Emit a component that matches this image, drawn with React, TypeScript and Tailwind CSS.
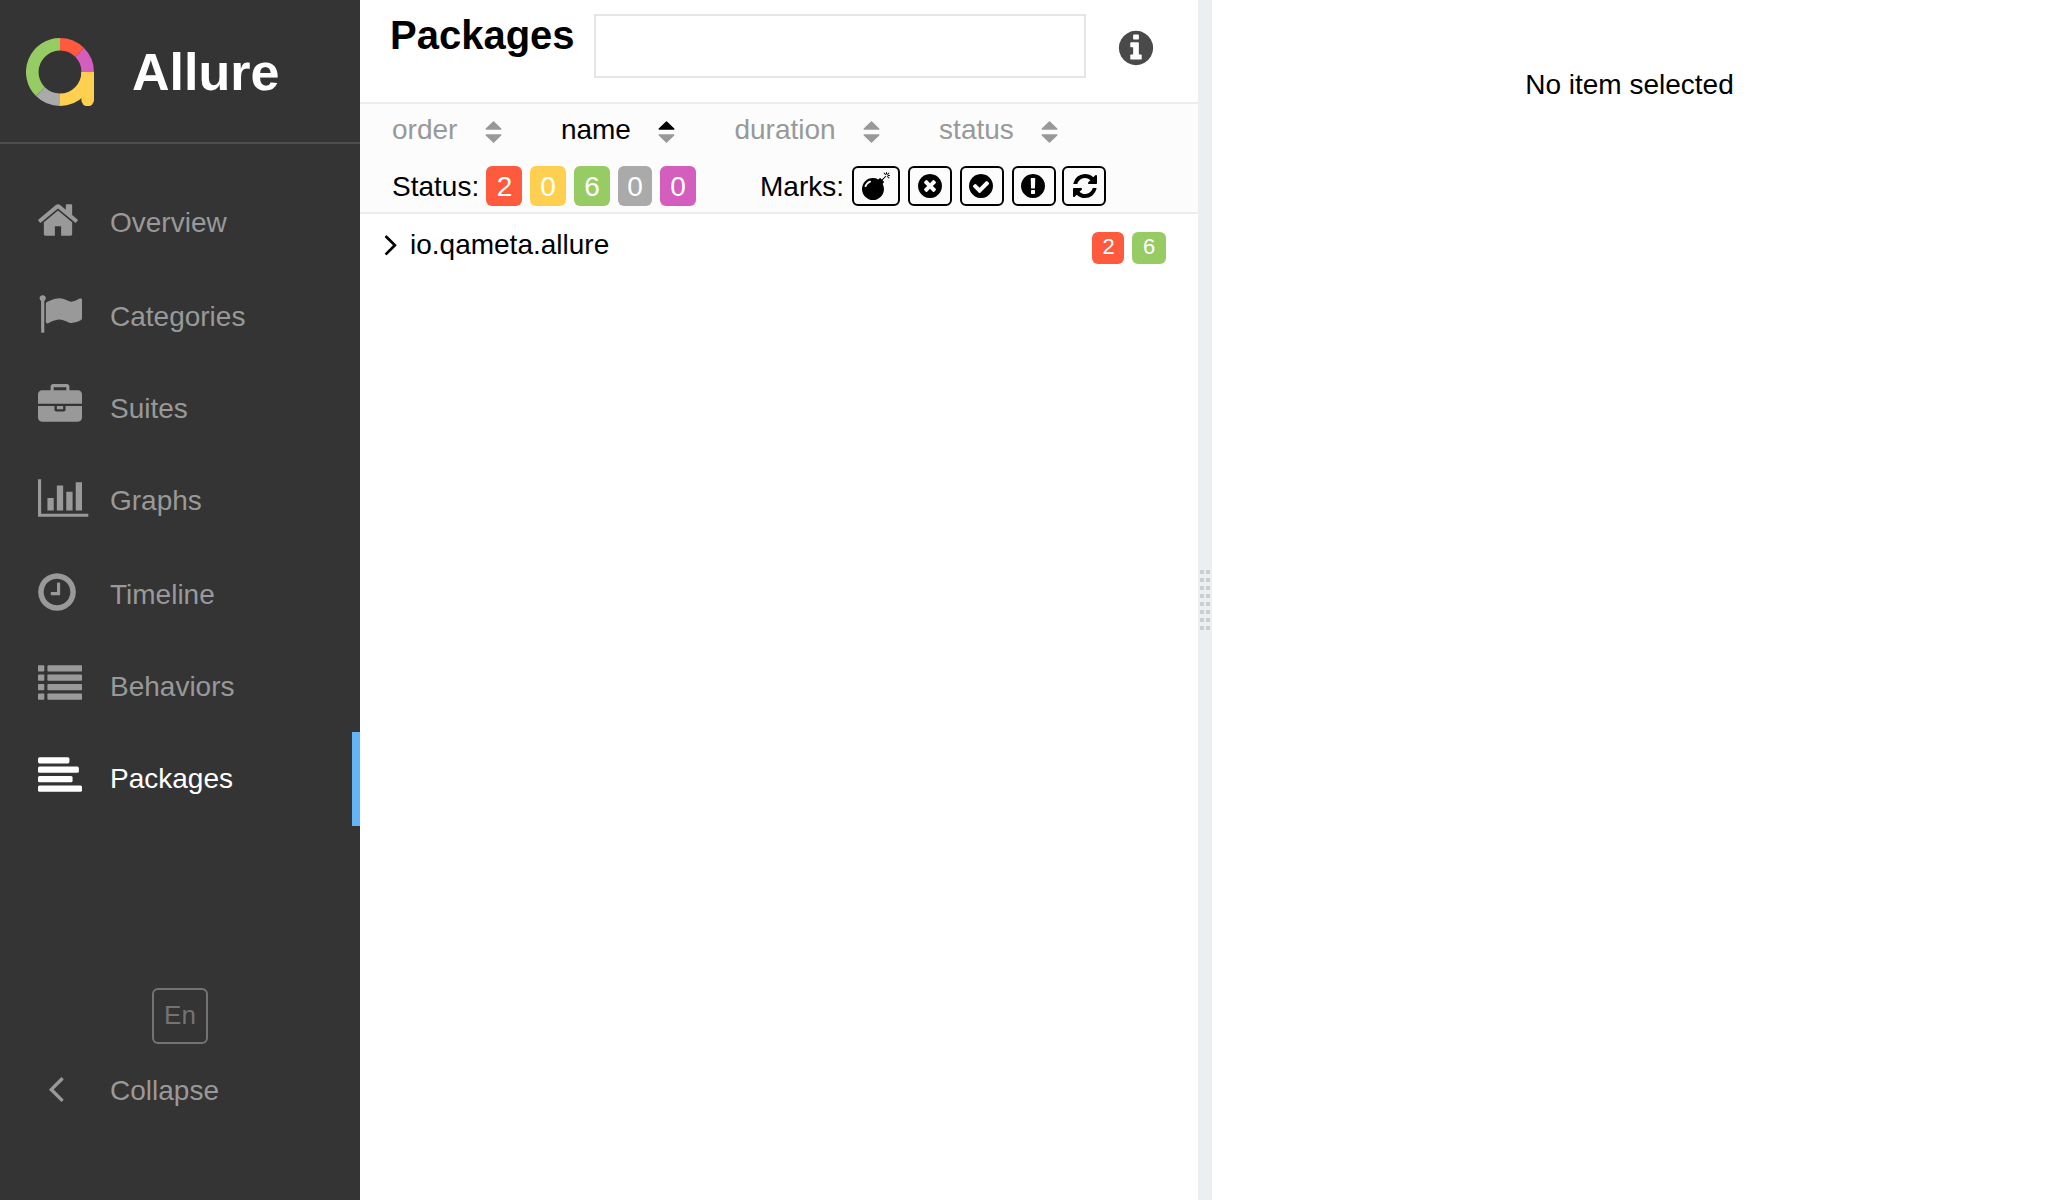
import React from "react";

const DISC =
  "M896 128q209 0 385.5 103t279.5 279.5 103 385.5-103 385.5-279.5 279.5-385.5 103-385.5-103-279.5-279.5-103-385.5 103-385.5 279.5-279.5 385.5-103z";

const PATHS = {
  home: "M1472 992v480q0 26-19 45t-45 19h-384v-384h-256v384h-384q-26 0-45-19t-19-45v-480q0-1 .5-3t.5-3l575-474 575 474q1 2 1 6zm223-69l-62 74q-8 9-21 11h-3q-13 0-21-7l-692-577-692 577q-12 8-24 7-13-2-21-11l-62-74q-8-10-7-23.5t11-21.5l719-599q32-26 76-26t76 26l244 204v-195q0-14 9-23t23-9h192q14 0 23 9t9 23v408l219 182q10 8 11 21.5t-7 23.5z",
  flag: "M320 256q0 72-64 110v1266q0 13-9.5 22.5t-22.5 9.5h-64q-13 0-22.5-9.5t-9.5-22.5v-1266q-64-38-64-110 0-53 37.5-90.5t90.5-37.5 90.5 37.5 37.5 90.5zm1472 64v763q0 25-12.5 38.5t-39.5 27.5q-215 116-369 116-61 0-123.5-22t-108.5-48-115.5-48-142.5-22q-192 0-464 146-17 9-33 9-26 0-45-19t-19-45v-742q0-32 31-55 21-14 79-43 236-120 421-120 107 0 200 29t219 88q38 19 88 19 54 0 117.5-21t110-47 88-47 54.5-21q26 0 45 19t19 45z",
  briefcase:
    "M640 256h512v-128h-512v128zm1152 640v480q0 66-47 113t-113 47h-1472q-66 0-113-47t-47-113v-480h672v160q0 26 19 45t45 19h320q26 0 45-19t19-45v-160h672zm-768 0v128h-256v-128h256zm768-480v384h-1792v-384q0-66 47-113t113-47h352v-160q0-40 28-68t68-28h576q40 0 68 28t28 68v160h352q66 0 113 47t47 113z",
  chart:
    "M640 896v512h-256v-512h256zm384-512v1024h-256v-1024h256zm1024 1152v128h-2048v-1536h128v1408h1920zm-640-896v768h-256v-768h256zm384-384v1152h-256v-1152h256z",
  clock:
    "M1024 544v448q0 14-9 23t-23 9h-320q-14 0-23-9t-9-23v-64q0-14 9-23t23-9h224v-352q0-14 9-23t23-9h64q14 0 23 9t9 23zm416 352q0-148-73-273t-198-198-273-73-273 73-198 198-73 273 73 273 198 198 273 73 273-73 198-198 73-273zm224 0q0 209-103 385.5t-279.5 279.5-385.5 103-385.5-103-279.5-279.5-103-385.5 103-385.5 279.5-279.5 385.5-103 385.5 103 279.5 279.5 103 385.5z",
  left: "M1203 544q0 13-10 23l-393 393 393 393q10 10 10 23t-10 23l-50 50q-10 10-23 10t-23-10l-466-466q-10-10-10-23t10-23l466-466q10-10 23-10t23 10l50 50q10 10 10 23z",
  right:
    "M1171 960q0 13-10 23l-466 466q-10 10-23 10t-23-10l-50-50q-10-10-10-23t10-23l393-393-393-393q-10-10-10-23t10-23l50-50q10-10 23-10t23 10l466 466q10 10 10 23z",
  info:
    DISC +
    "M1152 1376v-160q0-14-9-23t-23-9h-96v-512q0-14-9-23t-23-9h-320q-14 0-23 9t-9 23v160q0 14 9 23t23 9h96v320h-96q-14 0-23 9t-9 23v160q0 14 9 23t23 9h448q14 0 23-9t9-23zm-128-896v-160q0-14-9-23t-23-9h-192q-14 0-23 9t-9 23v160q0 14 9 23t23 9h192q14 0 23-9t9-23z",
  times:
    DISC +
    "M1277 1122q0-26-19-45l-181-181 181-181q19-19 19-45 0-27-19-46l-90-90q-19-19-46-19-26 0-45 19l-181 181-181-181q-19-19-45-19-27 0-46 19l-90 90q-19 19-19 46 0 26 19 45l181 181-181 181q-19 19-19 45 0 27 19 46l90 90q19 19 46 19 26 0 45-19l181-181 181 181q19 19 45 19 27 0 46-19l90-90q19-19 19-46z",
  check:
    DISC +
    "M1412 734q0-28-18-46l-91-90q-19-19-45-19t-45 19l-408 407-226-226q-19-19-45-19t-45 19l-91 90q-18 18-18 46 0 27 18 45l362 362q19 19 45 19 27 0 46-19l543-543q18-18 18-45z",
  exclamation:
    DISC +
    "M1024 1375v-190q0-14-9-23.5t-22-9.5h-192q-13 0-23 10t-10 23v190q0 13 10 23t23 10h192q13 0 22-9.5t9-23.5zm-2-344l18-621q0-12-10-18-10-8-24-8h-220q-14 0-24 8-10 6-10 18l17 621q0 10 10 17.5t24 7.5h185q14 0 23.5-7.5t10.5-17.5z",
  refresh:
    "M1639 1056q0 5-1 7-64 268-268 434.5t-478 166.5q-146 0-282.5-55t-243.5-157l-129 129q-19 19-45 19t-45-19-19-45v-448q0-26 19-45t45-19h448q26 0 45 19t19 45-19 45l-137 137q71 66 161 102t187 36q134 0 250-65t186-179q11-17 53-117 8-23 30-23h192q13 0 22.5 9.5t9.5 22.5zm25-800v448q0 26-19 45t-45 19h-448q-26 0-45-19t-19-45 19-45l138-138q-148-137-349-137-134 0-250 65t-186 179q-11 17-53 117-8 23-30 23h-199q-13 0-22.5-9.5t-9.5-22.5v-7q65-268 270-434.5t480-166.5q146 0 284 55.5t245 156.5l130-129q19-19 45-19t45 19 19 45z",
  bomb: "M571 589q-10-25-34-35t-49 0q-108 44-191 127t-127 191q-10 25 0 49t35 34q13 5 24 5 42 0 60-40 34-84 98.5-148.5t148.5-98.5q25-11 35-35t0-49zm942-356l46 46-244 243 68 68q19 19 19 45.5t-19 45.5l-64 64q89 161 89 343 0 143-55.5 273.5t-150 225-225 150-273.5 55.5-273.5-55.5-225-150-150-225-55.5-273.5 55.5-273.5 150-225 225-150 273.5-55.5q182 0 343 89l64-64q19-19 45.5-19t45.5 19l68 68zm8-56q-10 10-22 10-13 0-23-10l-91-90q-9-10-9-23t9-23q10-9 23-9t23 9l90 91q10 9 10 22.5t-10 22.5zm230 230q-11 9-23 9t-23-9l-90-91q-10-9-10-22.5t10-22.5q9-10 22.5-10t22.5 10l91 90q9 10 9 23t-9 23zm41-183q0 14-9 23t-23 9h-96q-14 0-23-9t-9-23 9-23 23-9h96q14 0 23 9t9 23zm-192-192v96q0 14-9 23t-23 9-23-9-9-23v-96q0-14 9-23t23-9 23 9 9 23zm151 55l-91 90q-10 10-22 10-13 0-23-10-10-9-10-22.5t10-22.5l90-91q10-9 23-9t23 9q9 10 9 23t-9 23z",
};

type Glyph = keyof typeof PATHS;

function Icon({ name, className }: { name: Glyph; className: string }) {
  return (
    <svg viewBox={name === "chart" ? "0 0 2048 1792" : "0 0 1792 1792"} fill="currentColor" fillRule="evenodd" className={`shrink-0 overflow-visible ${className}`}>
      <path d={PATHS[name]} />
    </svg>
  );
}

function ListIcon() {
  return (
    <svg viewBox="0 0 1792 1792" fill="currentColor" className="size-11">
      {[128, 512, 896, 1280].map((y) => (
        <g key={y}>
          <rect x="0" y={y} width="256" height="256" rx="32" />
          <rect x="384" y={y} width="1408" height="256" rx="32" />
        </g>
      ))}
    </svg>
  );
}

function AlignIcon() {
  return (
    <svg viewBox="0 0 1792 1792" fill="currentColor" className="size-11">
      <rect x="0" y="128" width="1280" height="256" rx="64" />
      <rect x="0" y="512" width="1664" height="256" rx="64" />
      <rect x="0" y="896" width="1408" height="256" rx="64" />
      <rect x="0" y="1280" width="1792" height="256" rx="64" />
    </svg>
  );
}

function Logo() {
  return (
    <svg viewBox="0 0 68 68" className="size-[68px] shrink-0" fill="none" strokeWidth="12.6">
      <path d="M34 6.3A27.7 27.7 0 0 0 14.41 53.59" stroke="#97cc64" />
      <path d="M14.41 53.59A27.7 27.7 0 0 0 34 61.7" stroke="#aaaaaa" />
      <path d="M34 61.7A27.7 27.7 0 0 0 61.7 34" stroke="#ffd050" />
      <path d="M55.4 34H68V62a6.3 6.3 0 0 1-12.6 0z" fill="#ffd050" stroke="none" />
      <path d="M34 6.3A27.7 27.7 0 0 1 53.59 14.41" stroke="#fd5a3e" />
      <path d="M53.59 14.41A27.7 27.7 0 0 1 61.7 34" stroke="#d35ebe" />
    </svg>
  );
}

const NAV = [
  { label: "Overview", row: "h-[94px] text-[#999]", pad: "pl-9", icon: <Icon name="home" className="size-11" /> },
  { label: "Categories", row: "h-[92px] text-[#999]", pad: "pl-[38px]", icon: <Icon name="flag" className="size-11" /> },
  { label: "Suites", row: "h-[92px] text-[#999]", pad: "pl-[38px]", icon: <Icon name="briefcase" className="size-11" /> },
  { label: "Graphs", row: "h-[94px] text-[#999]", pad: "pl-[38px]", icon: <Icon name="chart" className="h-11 w-[50.3px]" /> },
  { label: "Timeline", row: "h-[92px] text-[#999]", pad: "pl-[35px]", icon: <Icon name="clock" className="size-11" /> },
  { label: "Behaviors", row: "h-[92px] text-[#999]", pad: "pl-[38px]", icon: <ListIcon /> },
  { label: "Packages", row: "h-[94px] text-white border-r-8 border-[#64b5f6]", pad: "pl-[38px]", icon: <AlignIcon /> },
];

function Sidebar() {
  return (
    <aside className="flex w-[360px] shrink-0 flex-col bg-[#343434]">
      <div className="flex h-36 items-center border-b-2 border-[#4d4d4d] pt-0.5 pl-[26px]">
        <Logo />
        <span className="ml-[38px] text-[52px] leading-[60px] font-bold text-white">Allure</span>
      </div>
      <nav className="mt-8 flex flex-col">
        {NAV.map((n) => (
          <a key={n.label} className={`flex ${n.row}`}>
            <span className={`w-[110px] shrink-0 pt-[22.4px] ${n.pad}`}>{n.icon}</span>
            <span className="pt-[27px] leading-10">{n.label}</span>
          </a>
        ))}
      </nav>
      <div className="mt-auto flex flex-col pb-[87px]">
        <button className="flex size-14 items-center justify-center self-center rounded-md border-2 border-[#737373] pb-0.5 text-[26px] text-[#737373]">
          En
        </button>
        <a className="mt-[25px] flex h-11 text-[#999]">
          <span className="w-[110px] shrink-0 pl-[34px]">
            <Icon name="left" className="size-11 -translate-y-[3px]" />
          </span>
          <span className="pt-[2px] leading-10">Collapse</span>
        </a>
      </div>
    </aside>
  );
}

function Sorter({ label, active }: { label: string; active?: boolean }) {
  return (
    <div className={`mr-[59px] flex ${active ? "text-black" : "text-[#999]"}`}>
      <span className="leading-10">{label}</span>
      <svg viewBox="0 0 17 24" className="mt-[10px] ml-[27.5px] h-6 w-[17px]">
        <path d="M8.5 2L15.8 9.1H1.2z" fill={active ? "#000" : "#999"} stroke={active ? "#000" : "#999"} strokeWidth="1.4" strokeLinejoin="round" />
        <path d="M8.5 22L15.8 14.9H1.2z" fill="#999" stroke="#999" strokeWidth="1.4" strokeLinejoin="round" />
      </svg>
    </div>
  );
}

const STATUSES = [
  { n: 2, style: "w-9 pl-px bg-[#fd5a3e]" },
  { n: 0, style: "w-9 bg-[#ffd050]" },
  { n: 6, style: "w-9 bg-[#97cc64]" },
  { n: 0, style: "w-[34px] bg-[#aaa]" },
  { n: 0, style: "w-9 bg-[#d35ebe]" },
];

const MARKS: { name: Glyph; box: string }[] = [
  { name: "bomb", box: "w-12" },
  { name: "times", box: "ml-2 w-11" },
  { name: "check", box: "ml-2 w-11 pr-0.5" },
  { name: "exclamation", box: "ml-2 w-11 pr-0.5" },
  { name: "refresh", box: "ml-1.5 w-11 pl-0.5" },
];

function TreePane() {
  return (
    <section className="flex w-[838px] shrink-0 flex-col bg-white">
      <header className="flex h-[102px] pl-[30px]">
        <h1 className="mt-[12px] w-[204px] text-[40px] leading-[46px] font-bold">Packages</h1>
        <input className="mt-[14px] h-16 w-[492px] border-2 border-[#e5e5e5] bg-white outline-none" />
        <Icon name="info" className="mt-[27.5px] ml-[30px] size-10 text-[#4a4a4a]" />
      </header>
      <div className="h-28 border-y-2 border-[#ecedee] bg-[#fcfcfc] pl-8">
        <div className="mt-[6px] flex h-10">
          <Sorter label="order" />
          <Sorter label="name" active />
          <Sorter label="duration" />
          <Sorter label="status" />
        </div>
        <div className="mt-4 flex h-10">
          <span className="w-[94px] pt-px leading-10">Status:</span>
          <div className="flex gap-2">
            {STATUSES.map((s, i) => (
              <span key={i} className={`flex justify-center rounded-md pt-px leading-10 text-white ${s.style}`}>
                {s.n}
              </span>
            ))}
          </div>
          <span className="ml-16 w-[92px] pt-px leading-10">Marks:</span>
          {MARKS.map((m) => (
            <span key={m.name} className={`flex h-10 items-center justify-center rounded-md border-2 border-black ${m.box}`}>
              <Icon name={m.name} className="size-7" />
            </span>
          ))}
        </div>
      </div>
      <div className="flex h-16 pr-8 pl-[13.2px]">
        <Icon name="right" className="mt-[12.2px] mr-[0.8px] size-9" />
        <span className="mt-[11px] flex-1 leading-10">io.qameta.allure</span>
        <span className="mt-[18px] flex h-8 w-8 justify-center rounded-md bg-[#fd5a3e] pl-px text-[22px] leading-[29px] text-white">2</span>
        <span className="mt-[18px] ml-2 flex h-8 w-[34px] justify-center rounded-md bg-[#97cc64] text-[22px] leading-[29px] text-white">6</span>
      </div>
    </section>
  );
}

export default function App() {
  return (
    <div className="flex h-[1200px] w-[2048px] overflow-hidden bg-white font-['Liberation_Sans',Arial,sans-serif] text-[28px] text-black">
      <Sidebar />
      <TreePane />
      <div className="flex w-[14px] shrink-0 items-center bg-[#eceff1] pl-0.5">
        <div className="grid grid-cols-2 gap-x-0.5 gap-y-1">
          {Array.from({ length: 16 }, (_, i) => (
            <i key={i} className="size-1 bg-[#cccfd0]" />
          ))}
        </div>
      </div>
      <main className="flex-1 pt-[65px] pr-px text-center leading-10">No item selected</main>
    </div>
  );
}
